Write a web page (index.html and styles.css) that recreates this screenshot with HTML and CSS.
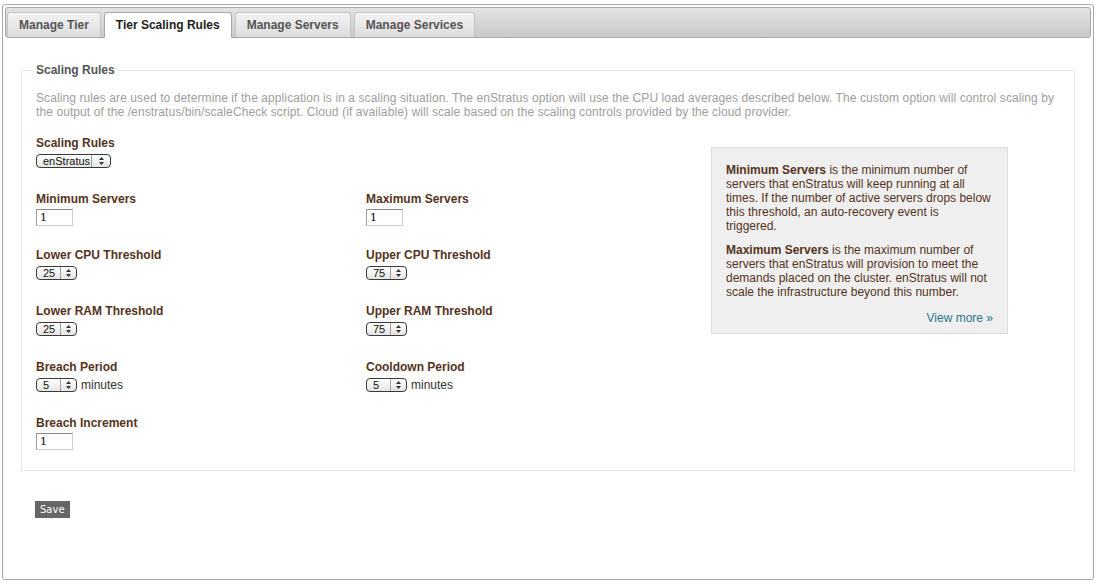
FILE: index.html
```html
<!DOCTYPE html>
<html>
<head>
<meta charset="utf-8">
<link rel="stylesheet" href="styles.css">
</head>
<body>
<div class="frame">
  <div class="tabbar">
    <div class="tab">Manage Tier</div>
    <div class="tab active">Tier Scaling Rules</div>
    <div class="tab">Manage Servers</div>
    <div class="tab">Manage Services</div>
  </div>
  <div class="content">
    <fieldset class="rules">
      <legend>Scaling Rules</legend>
      <p class="desc">Scaling rules are used to determine if the application is in a scaling situation. The enStratus option will use the CPU load averages described below. The custom option will control scaling by the output of the /enstratus/bin/scaleCheck script. Cloud (if available) will scale based on the scaling controls provided by the cloud provider.</p>
      <div class="main">
        <div class="form">
          <div class="field wide">
            <label>Scaling Rules</label>
            <div class="ctl sel-ctl">
              <span class="select big"><span class="val">enStratus</span><span class="arr"><svg width="5" height="8" viewBox="0 0 5 8"><path d="M2.5 0L5 3H0z M0 5h5L2.5 8z" fill="#333"/></svg></span></span>
            </div>
          </div>
          <div class="field">
            <label>Minimum Servers</label>
            <div class="ctl"><span class="num">1</span></div>
          </div>
          <div class="field">
            <label>Maximum Servers</label>
            <div class="ctl"><span class="num">1</span></div>
          </div>
          <div class="field">
            <label>Lower CPU Threshold</label>
            <div class="ctl sel-ctl"><span class="select"><span class="val">25</span><span class="arr"><svg width="5" height="8" viewBox="0 0 5 8"><path d="M2.5 0L5 3H0z M0 5h5L2.5 8z" fill="#333"/></svg></span></span></div>
          </div>
          <div class="field">
            <label>Upper CPU Threshold</label>
            <div class="ctl sel-ctl"><span class="select"><span class="val">75</span><span class="arr"><svg width="5" height="8" viewBox="0 0 5 8"><path d="M2.5 0L5 3H0z M0 5h5L2.5 8z" fill="#333"/></svg></span></span></div>
          </div>
          <div class="field">
            <label>Lower RAM Threshold</label>
            <div class="ctl sel-ctl"><span class="select"><span class="val">25</span><span class="arr"><svg width="5" height="8" viewBox="0 0 5 8"><path d="M2.5 0L5 3H0z M0 5h5L2.5 8z" fill="#333"/></svg></span></span></div>
          </div>
          <div class="field">
            <label>Upper RAM Threshold</label>
            <div class="ctl sel-ctl"><span class="select"><span class="val">75</span><span class="arr"><svg width="5" height="8" viewBox="0 0 5 8"><path d="M2.5 0L5 3H0z M0 5h5L2.5 8z" fill="#333"/></svg></span></span></div>
          </div>
          <div class="field">
            <label>Breach Period</label>
            <div class="ctl sel-ctl"><span class="select"><span class="val">5</span><span class="arr"><svg width="5" height="8" viewBox="0 0 5 8"><path d="M2.5 0L5 3H0z M0 5h5L2.5 8z" fill="#333"/></svg></span></span><span class="unit">minutes</span></div>
          </div>
          <div class="field">
            <label>Cooldown Period</label>
            <div class="ctl sel-ctl"><span class="select"><span class="val">5</span><span class="arr"><svg width="5" height="8" viewBox="0 0 5 8"><path d="M2.5 0L5 3H0z M0 5h5L2.5 8z" fill="#333"/></svg></span></span><span class="unit">minutes</span></div>
          </div>
          <div class="field">
            <label>Breach Increment</label>
            <div class="ctl"><span class="num">1</span></div>
          </div>
        </div>
        <div class="info">
          <p><b>Minimum Servers</b> is the minimum number of servers that enStratus will keep running at all times. If the number of active servers drops below this threshold, an auto-recovery event is<br>triggered.</p>
          <p><b>Maximum Servers</b> is the maximum number of servers that enStratus will provision to meet the demands placed on the cluster. enStratus will not scale the infrastructure beyond this number.</p>
          <p class="more"><a>View more &raquo;</a></p>
        </div>
      </div>
    </fieldset>
    <div class="actions"><span class="save">Save</span></div>
  </div>
</div>
</body>
</html>
```

FILE: styles.css
```css
html, body {
  margin: 0;
  padding: 0;
  background: #fff;
}
body {
  font-family: "Liberation Sans", Arial, sans-serif;
  font-size: 12px;
  color: #333;
}
.frame {
  margin: 4px 2px 0 2px;
  height: 576px;
  box-sizing: border-box;
  border: 1px solid #a8a8a8;
  border-radius: 3px;
  padding: 2px;
}
.tabbar {
  height: 31px;
  box-sizing: border-box;
  border: 1px solid #a8a8a8;
  border-radius: 3px;
  background: linear-gradient(#e3e3e3, #c9c9c9);
  display: flex;
  align-items: flex-end;
  gap: 3px;
  padding: 0 1px;
}
.tab {
  height: 25px;
  box-sizing: border-box;
  padding: 0 11px;
  line-height: 24px;
  font-weight: bold;
  font-size: 12px;
  color: #555;
  background: linear-gradient(#f3f3f3, #dcdcdc);
  border: 1px solid #c4c4c4;
  border-bottom: none;
  border-radius: 3px 3px 0 0;
}
.tab.active {
  background: #fff;
  color: #222;
  border-color: #a8a8a8;
  height: 26px;
  margin-bottom: -1px;
}
.content {
  padding: 25px 16px 0 16px;
}
.rules {
  margin: 0;
  padding: 14px 14px 28px 14px;
  border: 1px solid #e8e8e8;
  min-width: 0;
}
.rules legend {
  padding: 0 3px;
  margin-left: -3px;
  font-weight: bold;
  font-size: 12px;
  line-height: 14px;
  color: #555;
}
.desc {
  margin: 0;
  line-height: 14px;
  color: #9e9e9e;
  letter-spacing: 0.09px;
}
.main {
  display: flex;
  margin-top: 17px;
}
.form {
  width: 675px;
  display: grid;
  grid-template-columns: 330px 330px;
  grid-template-rows: repeat(5, 56px) 26px;
}
.field.wide {
  grid-column: 1 / -1;
}
.field label {
  display: block;
  font-weight: bold;
  font-size: 12px;
  line-height: 14px;
  color: #553322;
}
.ctl {
  margin-top: 3px;
  display: flex;
  align-items: center;
  height: 16px;
}
.sel-ctl {
  margin-top: 4px;
  height: 14px;
}
.num {
  display: inline-block;
  width: 37px;
  height: 17px;
  box-sizing: border-box;
  border: 1px solid;
  border-color: #8a8a8a #cfcfcf #cfcfcf #a0a0a0;
  font-size: 11px;
  line-height: 15px;
  padding: 0 3px;
  color: #000;
  font-family: "DejaVu Serif", serif;
}
.select {
  display: inline-flex;
  align-items: stretch;
  height: 14px;
  width: 41px;
  box-sizing: border-box;
  border: 1px solid #3a3a3a;
  border-radius: 4px;
  background: linear-gradient(#ffffff, #e4e4e4);
  font-size: 11px;
  color: #111;
}
.select.big {
  width: 75px;
}
.select .val {
  flex: 1;
  line-height: 12px;
  padding-left: 6px;
  border-right: 1px solid #a0a0a0;
}
.select .arr {
  width: 15px;
  display: flex;
  align-items: center;
  justify-content: center;
}
.select.big .arr {
  width: 18px;
}
.unit {
  margin-left: 4px;
  font-size: 12px;
  color: #333;
}
.info {
  margin-top: 11px;
  width: 297px;
  align-self: flex-start;
  box-sizing: border-box;
  background: #efefef;
  border: 1px solid #dcdcdc;
  padding: 15px 14px 8px 14px;
  color: #553322;
  font-size: 12px;
  line-height: 14px;
}
.info p {
  margin: 0 0 10px 0;
}
.info p.more {
  margin: 12px 0 0 0;
  text-align: right;
}
.info a {
  color: #2a7886;
}
.actions {
  padding: 30px 0 0 14px;
}
.save {
  display: inline-block;
  height: 17px;
  line-height: 17px;
  padding: 0 5px;
  background: #666;
  color: #fff;
  font-family: "DejaVu Sans", sans-serif;
  font-size: 10px;
}
```
